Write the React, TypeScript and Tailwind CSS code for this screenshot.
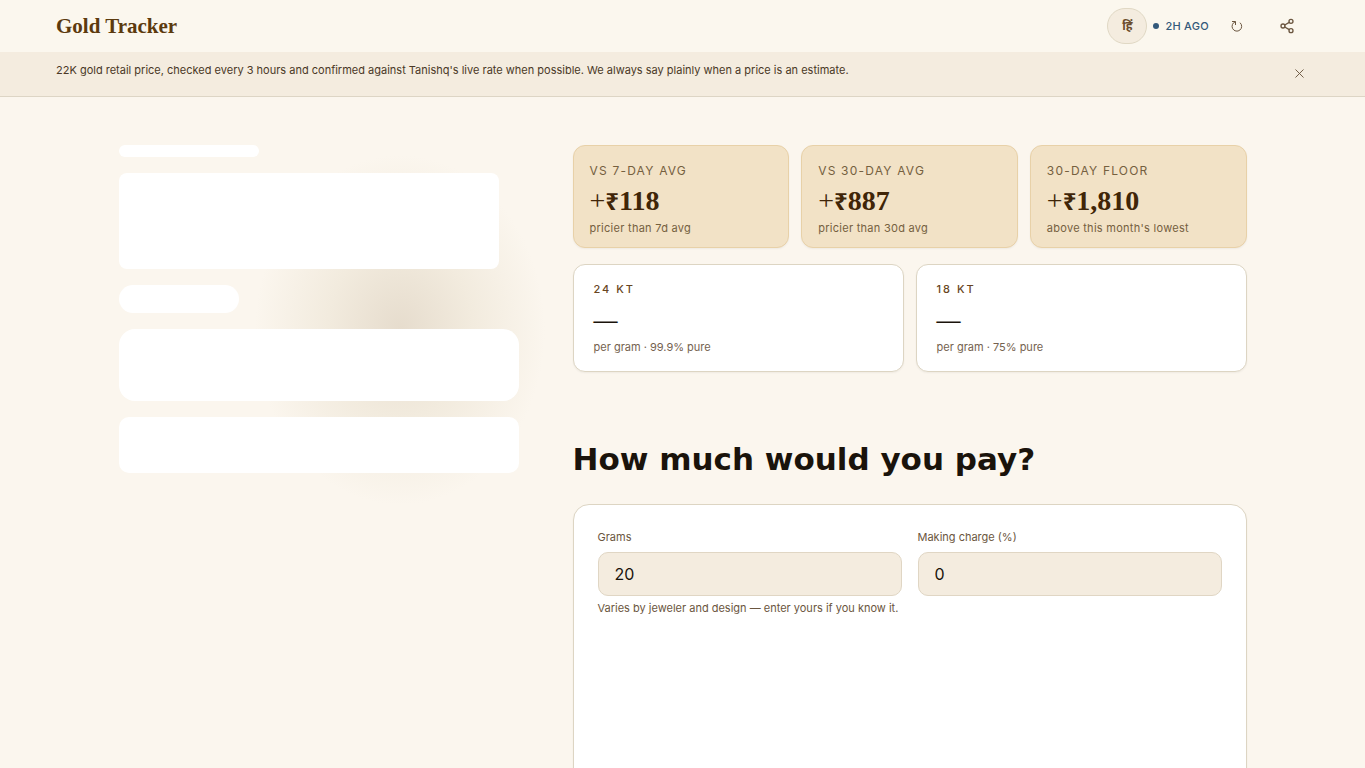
import { Share2, X } from "lucide-react";

interface Stat {
    label: string,
    amount: string,
    note: string
}

interface Purity {
    karat: string,
    price?: string,
    note: string
}

const stats: Stat[] = [
    { label: "VS 7-DAY AVG", amount: "118", note: "pricier than 7d avg" },
    { label: "VS 30-DAY AVG", amount: "887", note: "pricier than 30d avg" },
    { label: "30-DAY FLOOR", amount: "1,810", note: "above this month's lowest" },
];

const purities: Purity[] = [
    { karat: "24 KT", note: "per gram · 99.9% pure" },
    { karat: "18 KT", note: "per gram · 75% pure" },
];

function RefreshIcon() {
    return (<svg width="12" height="12" viewBox="0 0 12 12" fill="none" stroke="currentColor" strokeWidth="1">
        <path d="M1 1.5h3.5v3.5"/>
        <path d="M4.3 1.8A4.8 4.8 0 1 0 9 2.7"/>
    </svg>);
}

function Header() {
    return (<header className="flex h-[52px] items-center justify-between bg-[#fbf7ee] px-5 md:px-14">
        <a href="#" className="font-['Liberation_Serif',serif] text-[21px] leading-6 font-bold text-[#5c3a0e]">Gold Tracker</a>
        <div className="flex items-center gap-1.5">
            <button
                aria-label="Switch language"
                className="h-9 w-10 rounded-full border border-[#e0d8c4] bg-[#f4ecdf] font-['Noto_Sans',sans-serif] text-xs font-bold text-[#6b4c2c]">
                हिं
            </button>
            <p className="flex items-center gap-1.5 text-[11px] font-medium tracking-wide text-[#33597a]">
                <span className="size-1.5 rounded-full bg-[#33597a]"></span>
                2H AGO
            </p>
            <button aria-label="Refresh" className="flex size-11 items-center justify-center text-[#6b5640]">
                <RefreshIcon/>
            </button>
            <button aria-label="Share" className="flex size-11 items-center justify-center text-[#6b5640]">
                <Share2 size={16} strokeWidth={2}/>
            </button>
        </div>
    </header>);
}

function Notice() {
    return (<div className="flex items-start justify-between gap-4 border-b border-[#ddd5c5] bg-[#f4ecdf] px-5 pt-2.5 pb-3 md:px-14">
        <p className="text-[11px] leading-[17px] text-[#4a3826]">
            22K gold retail price, checked every 3 hours and confirmed against Tanishq's live rate when possible. We always say plainly when a price is an estimate.
        </p>
        <button aria-label="Dismiss" className="flex h-[22px] w-5 shrink-0 items-center justify-center text-[#6b5640]">
            <X size={15} strokeWidth={1.5}/>
        </button>
    </div>);
}

function PriceSkeleton() {
    return (<div className="relative flex flex-col gap-4 self-start">
        <div className="pointer-events-none absolute top-2.5 left-[136px] h-[350px] w-[290px] bg-[radial-gradient(closest-side,#e6dccd,#f2ebde_50%,#fbf6ee)]"></div>
        <div className="relative h-3 w-[140px] rounded-md bg-white"></div>
        <div className="relative h-24 w-[95%] rounded-lg bg-white"></div>
        <div className="relative h-7 w-[120px] rounded-full bg-white"></div>
        <div className="relative h-[72px] rounded-2xl bg-white"></div>
        <div className="relative h-14 rounded-[10px] bg-white"></div>
    </div>);
}

function StatCard({label, amount, note} : Stat) {
    return (<div className="rounded-xl border border-[#e8d1a8] bg-[#f2e2c6] px-4 pt-4 pb-2.5 shadow-xs">
        <p className="text-xs leading-[18px] tracking-widest text-[#75603f]">{label}</p>
        <p className="mt-1 font-['Liberation_Serif',serif] text-[28px] leading-[34px] font-bold text-[#402507]">
            <span className="font-normal">+</span>
            <span className="font-['Noto_Sans',sans-serif] text-2xl leading-none">₹</span>
            {amount}
        </p>
        <p className="mt-0.5 text-[11px] leading-[17px] tracking-wide text-[#75603f]">{note}</p>
    </div>);
}

function PurityCard({karat, price = "—", note} : Purity) {
    return (<div className="rounded-xl border border-[#ddd5c3] bg-white px-5 py-4 shadow-xs">
        <p className="text-[11px] leading-4 font-medium tracking-[2px] text-[#684522]">{karat}</p>
        <p className="mt-2 font-['Liberation_Serif',serif] text-2xl leading-[30px] font-bold text-[#1a130b]">{price}</p>
        <p className="mt-1 text-[11px] leading-4 text-[#75624f]">{note}</p>
    </div>);
}

interface FieldProps {
    id: string,
    label: string,
    value: string,
    hint?: string
}

function Field({id, label, value, hint} : FieldProps) {
    return (<div className="flex flex-col">
        <label htmlFor={id} className="text-[11px] leading-[17px] text-[#6b5640]">{label}</label>
        <input
            id={id}
            inputMode="decimal"
            defaultValue={value}
            className="mt-1.5 h-11 w-full rounded-[10px] border border-[#e0d6c4] bg-[#f4ecdf] px-4 text-base text-[#1a130b]"/>
        {hint && <p className="mt-1 text-[11px] leading-[17px] text-[#6b5640]">{hint}</p>}
    </div>);
}

function Calculator() {
    return (<section className="mt-[66px]">
        <h2 className="font-['DejaVu_Sans',sans-serif] text-[31px] leading-[42px] font-bold text-[#1a130b]">How much would you pay?</h2>
        <div className="mt-6 min-h-[360px] rounded-2xl border border-[#ddd5c3] bg-white p-6 shadow-xs">
            <div className="grid gap-4 sm:grid-cols-2">
                <Field id="grams" label="Grams" value="20" hint="Varies by jeweler and design — enter yours if you know it."/>
                <Field id="making-charge" label="Making charge (%)" value="0"/>
            </div>
        </div>
    </section>);
}

export default function App() {
    return (<div className="min-h-screen bg-[#fbf6ee] font-['Inter',sans-serif]">
        <Header/>
        <Notice/>
        <main className="mx-auto grid max-w-[1240px] gap-[54px] px-5 py-12 md:px-14 lg:grid-cols-[400px_1fr]">
            <PriceSkeleton/>
            <div>
                <div className="grid gap-3 sm:grid-cols-3">
                    {stats.map((stat) => <StatCard key={stat.label} {...stat}/>)}
                </div>
                <div className="mt-4 grid gap-3 sm:grid-cols-2">
                    {purities.map((purity) => <PurityCard key={purity.karat} {...purity}/>)}
                </div>
                <Calculator/>
            </div>
        </main>
    </div>);
}
